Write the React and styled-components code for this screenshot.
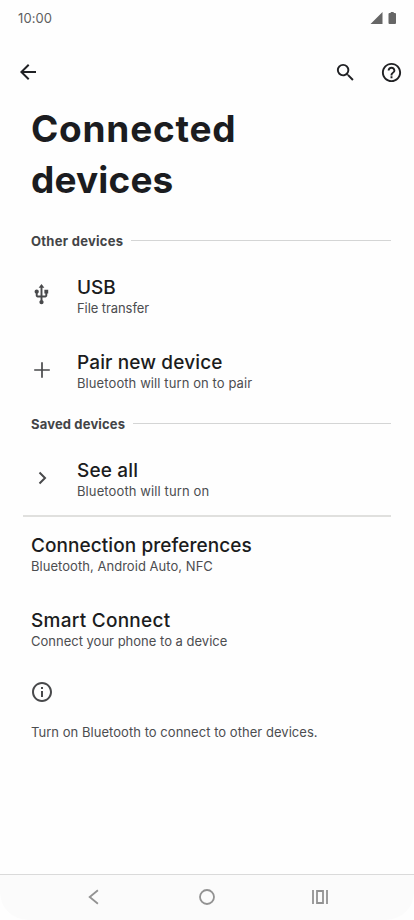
import React from "react";
import styled, { createGlobalStyle } from "styled-components";
import {
  MdArrowBack,
  MdSearch,
  MdHelpOutline,
  MdUsb,
  MdInfoOutline,
} from "react-icons/md";

const GlobalStyle = createGlobalStyle`
  * {
    box-sizing: border-box;
  }
  body {
    margin: 0;
    background: #fefefe;
    font-family: "Inter", "Liberation Sans", sans-serif;
  }
  svg {
    display: block;
    flex-shrink: 0;
  }
`;

const Phone = styled.div`
  width: 414px;
  height: 920px;
  display: flex;
  flex-direction: column;
  overflow: hidden;
  background: #fefefe;
  color: #1b1c20;
`;

const StatusBar = styled.div`
  height: 36px;
  padding: 0 17px 0 18px;
  display: flex;
  align-items: center;
  justify-content: space-between;
  color: #5f5f5f;
`;

const Clock = styled.span`
  font-size: 13px;
  letter-spacing: ${(p) => p.$spacing}px;
`;

const AppBar = styled.div`
  height: 72px;
  padding: 0 11.5px 0 15.5px;
  display: flex;
  align-items: center;
  color: #202124;
`;

const Actions = styled.div`
  margin-left: auto;
  display: flex;
  gap: 23px;
`;

const Title = styled.h1`
  margin: -5px 0 26px;
  padding: 0 31px;
  height: 97px;
  font-size: 37px;
  line-height: 51px;
  font-weight: 700;
`;

const TitleLine = styled.span`
  display: block;
  letter-spacing: ${(p) => p.$spacing}px;
`;

const SectionHeader = styled.div`
  height: 33px;
  padding: 0 23px 3px 31px;
  display: flex;
  align-items: center;
  gap: 8px;
`;

const SectionName = styled.h2`
  margin: 0;
  font-size: 13px;
  line-height: 18px;
  font-weight: 700;
  color: #434447;
  letter-spacing: ${(p) => p.$spacing}px;
  white-space: nowrap;
`;

const Rule = styled.div`
  flex: 1;
  height: 1px;
  margin-bottom: 1px;
  background: #d4d5d5;
`;

const Row = styled.div`
  height: 75px;
  padding: 17px 31px 15px;
  display: flex;
`;

const IconSlot = styled.div`
  width: 47px;
  height: 37px;
  margin-left: -1px;
  display: flex;
  align-items: center;
  color: #48494b;
`;

const RowTitle = styled.div`
  font-size: 19px;
  line-height: 24px;
  font-weight: 500;
  letter-spacing: ${(p) => p.$spacing}px;
  white-space: nowrap;
`;

const Small = styled.div`
  font-size: 13px;
  line-height: 17px;
  color: #4c4d50;
  letter-spacing: ${(p) => p.$spacing}px;
  white-space: nowrap;
`;

const Divider = styled.div`
  height: 2px;
  margin: -2px 23px 0 23px;
  background: #e0e0de;
`;

const Footer = styled.div`
  padding: 13px 31px;
  display: flex;
  flex-direction: column;
  gap: 20px;
  color: #48494b;

  svg {
    margin-left: -1px;
  }
`;

const NavBar = styled.div`
  margin-top: auto;
  height: 46px;
  padding: 0 37px 2px;
  display: grid;
  grid-template-columns: repeat(3, 1fr);
  align-items: center;
  justify-items: center;
  border-top: 1px solid #dadada;
  border-radius: 0 0 28px 28px;
  background: #fbfbfb;
  color: #929292;
`;

const PlusIcon = () => (
  <svg width="24" height="24" viewBox="0 0 24 24" fill="none" stroke="currentColor" strokeWidth="1.7">
    <path d="M12 4.200v15.600M4.200 12h15.600" />
  </svg>
);

const ChevronIcon = () => (
  <svg width="24" height="24" viewBox="0 0 24 24" fill="none" stroke="currentColor" strokeWidth="2">
    <path d="M9.500 6.500 15 12l-5.500 5.500" />
  </svg>
);

const Item = ({ icon, title, text, titleSpacing = 0, textSpacing = 0 }) => (
  <Row>
    {icon && <IconSlot>{icon}</IconSlot>}
    <div>
      <RowTitle $spacing={titleSpacing}>{title}</RowTitle>
      <Small $spacing={textSpacing}>{text}</Small>
    </div>
  </Row>
);

const Section = ({ name, spacing }) => (
  <SectionHeader>
    <SectionName $spacing={spacing}>{name}</SectionName>
    <Rule />
  </SectionHeader>
);

const App = () => {
  return (
    <Phone>
      <GlobalStyle />
      <StatusBar>
        <Clock $spacing={0.1}>10:00</Clock>
        <svg width="28" height="14" viewBox="0 0 28 14" fill="#666">
          <path d="M1.5 13 13.5 1v12zM19.5 3q0-1 1-1h1.2V1h3v1H26q1 0 1 1v9q0 1-1 1h-5.500q-1 0-1-1z" />
        </svg>
      </StatusBar>
      <AppBar>
        <MdArrowBack size={24} />
        <Actions>
          <MdSearch size={23} />
          <MdHelpOutline size={23} />
        </Actions>
      </AppBar>
      <Title>
        <TitleLine $spacing={0.75}>Connected</TitleLine>
        <TitleLine $spacing={0.15}>devices</TitleLine>
      </Title>

      <Section name="Other devices" spacing={0.28} />
      <Item icon={<MdUsb size={23} />} title="USB" text="File transfer" textSpacing={-0.08} />
      <Item
        icon={<PlusIcon />}
        title="Pair new device"
        text="Bluetooth will turn on to pair"
        titleSpacing={0.13}
        textSpacing={0.09}
      />

      <Section name="Saved devices" spacing={0.16} />
      <Item
        icon={<ChevronIcon />}
        title="See all"
        text="Bluetooth will turn on"
        titleSpacing={0.15}
        textSpacing={0.11}
      />
      <Divider />

      <Item
        title="Connection preferences"
        text="Bluetooth, Android Auto, NFC"
        titleSpacing={0.07}
        textSpacing={0.04}
      />
      <Item
        title="Smart Connect"
        text="Connect your phone to a device"
        titleSpacing={0.26}
      />

      <Footer>
        <MdInfoOutline size={24} />
        <Small $spacing={0.04}>Turn on Bluetooth to connect to other devices.</Small>
      </Footer>

      <NavBar>
        <svg width="18" height="18" viewBox="0 0 18 18" fill="none" stroke="currentColor" strokeWidth="1.8">
          <path d="M12.900 2.200 4.700 9l8.200 6.800" />
        </svg>
        <svg width="18" height="18" viewBox="0 0 18 18" fill="none" stroke="currentColor" strokeWidth="1.8">
          <circle cx="9" cy="9" r="7" />
        </svg>
        <svg width="18" height="18" viewBox="0 0 18 18" fill="none" stroke="currentColor" strokeWidth="1.8">
          <path d="M2 2v14M16 2v14M6 3h6v12H6z" />
        </svg>
      </NavBar>
    </Phone>
  );
};

export default App;
